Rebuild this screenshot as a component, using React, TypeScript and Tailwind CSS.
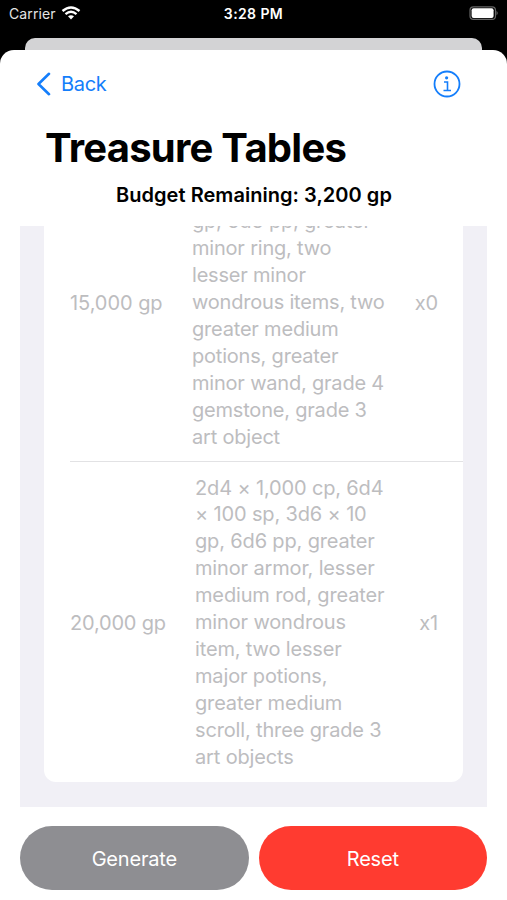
const rowA = ['gp, 6d6 pp, greater', 'minor ring, two', 'lesser minor', 'wondrous items, two', 'greater medium', 'potions, greater', 'minor wand, grade 4', 'gemstone, grade 3', 'art object'];
const rowB = ['2d4 × 1,000 cp, 6d4', '× 100 sp, 3d6 × 10', 'gp, 6d6 pp, greater', 'minor armor, lesser', 'medium rod, greater', 'minor wondrous', 'item, two lesser', 'major potions,', 'greater medium', 'scroll, three grade 3', 'art objects'];

function Lines({ lines }: { lines: string[] }) {
  return (
    <div>
      {lines.map((l) => (
        <div key={l} className="h-[26.9px] whitespace-nowrap leading-[26.9px]">{l}</div>
      ))}
    </div>
  );
}

export default function App() {
  return (
    <div className="flex h-[900px] w-[507px] flex-col overflow-hidden bg-black font-['Inter',sans-serif] text-black [font-feature-settings:'calt'_0]">
      <header className="grid h-[38px] shrink-0 grid-cols-3 items-start px-[9px] pt-1 text-white">
        <div className="flex h-5 items-center gap-[5px] text-[14px] tracking-[0.1px] text-[#e4e4e4]">
          <span className="-mt-0.5">Carrier</span>
          <svg className="-mt-0.5" width="20" height="14" viewBox="0 0 20 14" fill="none" stroke="white" strokeWidth="2.4">
            <path d="M1.500 5Q10-2 18.500 5M4.500 8.200Q10 3.500 15.500 8.200" />
            <path d="M7 10.300Q10 8 13 10.300L10 13.500Z" fill="white" stroke="none" />
          </svg>
        </div>
        <div className="h-5 text-center text-[14px] leading-5 font-semibold tracking-[0.4px]">3:28 PM</div>
        <div className="flex h-5 items-center justify-end">
          <svg className="-mt-0.5" width="29" height="14" viewBox="0 0 29 14">
            <rect x="1" y=".8" width="25.500" height="12.600" rx="3.500" fill="none" stroke="#666" strokeWidth="1.200" />
            <rect x="2.600" y="2.300" width="22" height="9.600" rx="2" fill="white" />
            <path d="M27.500 4.700Q30 7 27.500 9.300Z" fill="#666" />
          </svg>
        </div>
      </header>
      <div className="mx-[25px] h-3 shrink-0 rounded-t-[10px] bg-[#d3d3d5]" />
      <main className="flex min-h-0 flex-1 flex-col rounded-t-[14px] bg-white">
        <nav className="flex h-[68px] shrink-0 items-center justify-between pr-[46px] pl-9 text-[#147efb]">
          <button className="flex items-center gap-2.5 text-[20px] tracking-[-0.3px]">
            <svg width="15" height="24" viewBox="0 0 15 24" fill="none" stroke="currentColor" strokeWidth="2.600" strokeLinecap="round" strokeLinejoin="round"><path d="M13 1.800L2.500 12L13 22.200" /></svg>
            <span>Back</span>
          </button>
          <svg width="28" height="28" viewBox="0 0 28 28" fill="none" stroke="currentColor" strokeWidth="1.800">
            <circle cx="14" cy="14" r="12.500" /><circle cx="13.600" cy="7.800" r="1.600" fill="currentColor" stroke="none" /><path d="M11 12H14.500V20.500M10.500 20.500H18" strokeWidth="1.600" />
          </svg>
        </nav>
        <h1 className="h-[62px] pl-[45px] text-[40px] leading-[60px] font-bold tracking-[-0.75px]">Treasure Tables</h1>
        <p className="h-[46px] pl-px text-center text-[20px] leading-[30px] font-semibold tracking-[0.04px]">Budget Remaining: 3,200 gp</p>
        <section className="mx-5 flex h-[581px] shrink-0 flex-col overflow-hidden bg-[#f1f0f6] px-6 text-[20px] tracking-[-0.2px] text-[#bdbdbf]">
          <div className="h-[556px] overflow-hidden rounded-b-[12px] bg-white pl-[26px]">
            <div className="-mt-[84px] flex h-[320px] items-center border-b border-[#e2e2e4] pt-0.5 pr-[25px]">
              <span className="w-[122px] tracking-[-0.05px]">15,000 gp</span>
              <div className="pt-[53.8px]">
                <Lines lines={rowA} />
              </div>
              <span className="ml-auto">x0</span>
            </div>
            <div className="flex h-[320px] items-center pt-px pr-[25px]">
              <span className="w-[125px]">20,000 gp</span>
              <div className="tracking-[-0.15px]">
                <Lines lines={rowB} />
              </div>
              <span className="ml-auto">x1</span>
            </div>
          </div>
        </section>
        <footer className="flex gap-2.5 px-5 pt-[19px] text-[20px] tracking-[-0.2px] text-white">
          <button className="h-16 flex-1 rounded-full bg-[#8e8e92] pt-0.5">Generate</button>
          <button className="h-16 flex-1 rounded-full bg-[#ff3b30] pt-0.5">Reset</button>
        </footer>
      </main>
    </div>
  );
}
